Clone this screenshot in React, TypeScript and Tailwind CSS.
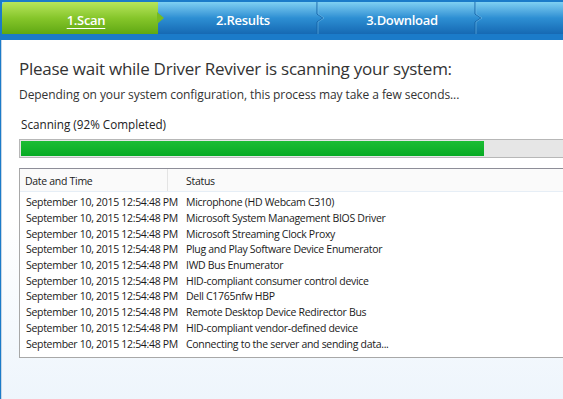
import React from "react";

const rows = [
  "Microphone (HD Webcam C310)",
  "Microsoft System Management BIOS Driver",
  "Microsoft Streaming Clock Proxy",
  "Plug and Play Software Device Enumerator",
  "IWD Bus Enumerator",
  "HID-compliant consumer control device",
  "Dell C1765nfw HBP",
  "Remote Desktop Device Redirector Bus",
  "HID-compliant vendor-defined device",
  "Connecting to the server and sending data...",
];

function Chevron() {
  return (
    <svg width="10" height="32" viewBox="0 0 10 32" className="shrink-0">
      <path d="M1 0 L1 12 L7 16 L1 20 L1 32" fill="none" stroke="#1564a8" strokeWidth="1" />
      <path d="M2 0 L2 12 L8 16 L2 20 L2 32" fill="none" stroke="#7cc4ee" strokeOpacity="0.5" strokeWidth="1" />
    </svg>
  );
}

export default function App() {
  return (
    <div
      className="w-[563px] h-[399px] overflow-hidden bg-[#1b7bc9] flex flex-col"
      style={{ fontFamily: "'Open Sans', 'Noto Sans', sans-serif" }}
    >
      {/* step tabs */}
      <div className="h-[40px] pt-[2px] pl-[2px] flex flex-col shrink-0">
        <div className="h-[32px] flex items-stretch bg-gradient-to-b from-[#7fd0f2] via-[#2d8fd3] to-[#1669b3]">
          <div className="relative w-[156px] shrink-0 rounded-tl-[4px] bg-gradient-to-b from-[#b8e65a] via-[#86c62a] to-[#5fa812] flex items-center justify-center pl-[12px] pt-[5px]">
            <span className="text-white text-[13px] font-semibold underline underline-offset-[3px] tracking-[-0.3px]">1.Scan</span>
            <svg width="7" height="12" viewBox="0 0 7 12" className="absolute right-[-6px] top-[10px]">
              <path d="M0 0 L7 6 L0 12 Z" fill="#76bb20" />
            </svg>
          </div>
          <div className="w-[158px] shrink-0 flex items-center justify-center pl-[12px] pt-[5px]">
            <span className="text-white text-[13px] font-semibold tracking-[-0.3px]">2.Results</span>
          </div>
          <Chevron />
          <div className="w-[148px] shrink-0 flex items-center justify-center pl-[4px] pt-[5px]">
            <span className="text-white text-[13px] font-semibold tracking-[-0.3px]">3.Download</span>
          </div>
          <Chevron />
          <div className="flex-1" />
        </div>
      </div>

      {/* content */}
      <div className="flex-1 ml-[1px] border-l border-[#c8d6e4] bg-gradient-to-b from-white via-white to-[#eef5fc] pl-[17px] pt-[17px] flex flex-col">
        <h1 className="text-[17px] leading-[24px] text-[#333333] tracking-[-0.25px] whitespace-nowrap">
          Please wait while Driver Reviver is scanning your system:
        </h1>
        <p className="mt-[6px] text-[12px] leading-[16px] text-[#333333] tracking-[-0.08px] whitespace-nowrap">
          Depending on your system configuration, this process may take a few seconds...
        </p>
        <p className="mt-[14px] ml-[2px] text-[11.7px] leading-[14px] text-[#222222] whitespace-nowrap">
          Scanning (92% Completed)
        </p>

        {/* progress */}
        <div className="mt-[8px] h-[19px] w-[560px] border border-[#b7b7b7] bg-[#e6e6e6] p-[1px] flex">
          <div className="w-[463px] h-full bg-gradient-to-b from-[#1cbd34] to-[#06ab23]" />
        </div>

        {/* log table */}
        <div className="mt-[10px] w-[560px] border border-[#a8a8a8] border-t-[#8e8e98] bg-white text-[10.5px] text-[#1a1a1a] tracking-[-0.3px]">
          <div className="h-[23px] flex items-center bg-[#fafafa] border-b border-[#e6eef6]">
            <div className="w-[148px] pl-[5px] border-r border-[#e4e4e4] h-full flex items-center pt-[3px]">Date and Time</div>
            <div className="pl-[18px] pt-[3px]">Status</div>
          </div>
          <div className="pt-[3px] pb-[5px]">
            {rows.map((r) => (
              <div key={r} className="h-[15.7px] flex items-center whitespace-nowrap leading-[15px]">
                <div className="w-[166px] pl-[6px] shrink-0">September 10, 2015 12:54:48 PM</div>
                <div>{r}</div>
              </div>
            ))}
          </div>
        </div>
      </div>
    </div>
  );
}
